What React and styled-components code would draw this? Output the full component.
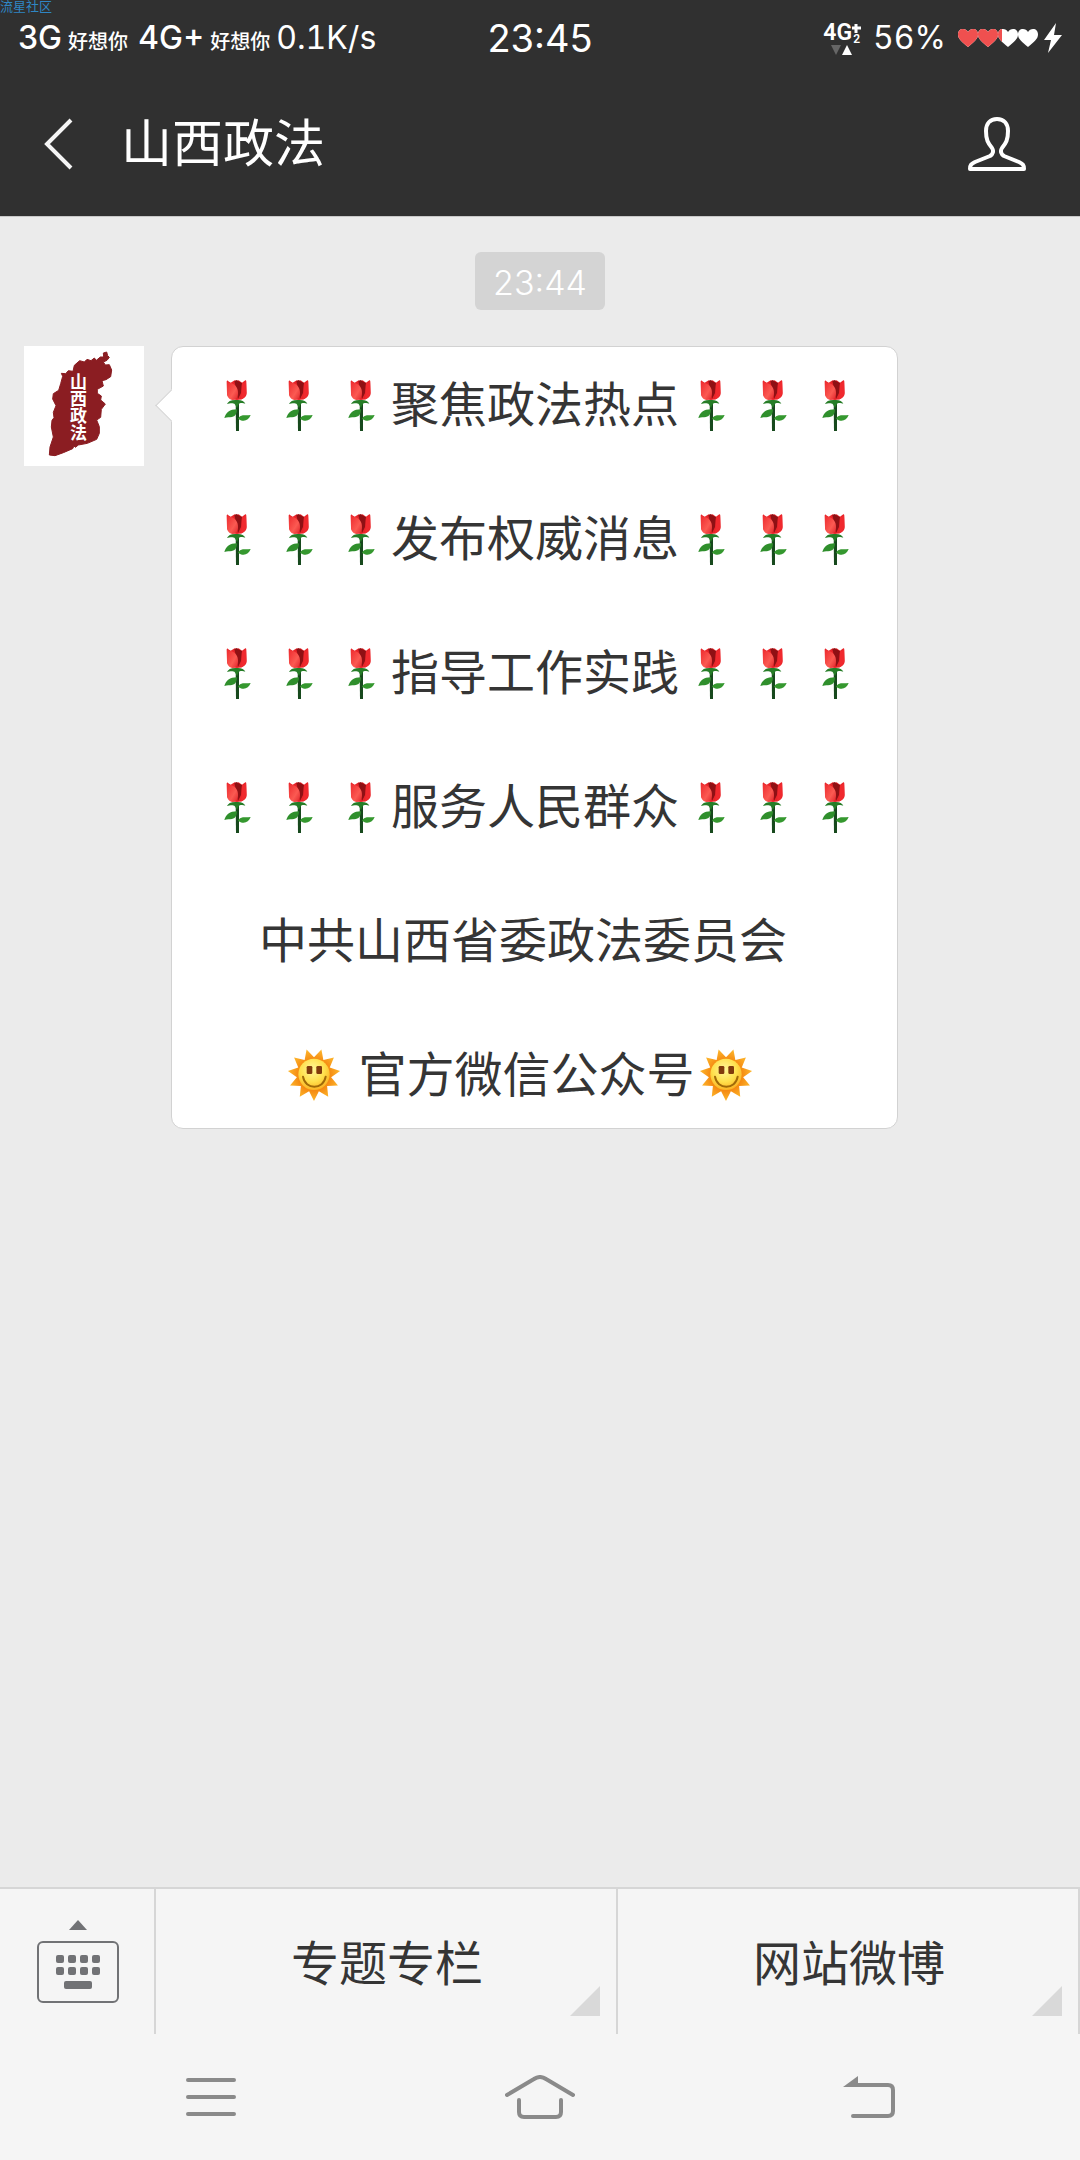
import React from "react";
import styled, { createGlobalStyle } from "styled-components";

const GlobalStyle = createGlobalStyle`
    * {
        box-sizing: border-box;
    }
    body {
        margin: 0;
        background-color: #ebebeb;
        font-family: Inter, "Noto Sans CJK SC", sans-serif;
    }
    button {
        margin: 0;
        padding: 0;
        border: 0;
        background: none;
        color: inherit;
        font: inherit;
        cursor: pointer;
    }
    svg {
        display: block;
    }
`;

const Page = styled.div`
    display: flex;
    flex-direction: column;
    min-height: 100vh;
`;

const TopArea = styled.header`
    position: relative;
    background-color: #303030;
    border-bottom: 1px solid #c8c8c8;
    color: #fff;
`;

const Watermark = styled.span`
    position: absolute;
    top: 0;
    left: 0;
    font-size: 13px;
    line-height: 13px;
    color: #2f86c4;
`;

const StatusBar = styled.div`
    display: grid;
    grid-template-columns: 1fr auto 1fr;
    align-items: center;
    height: 72px;
    padding: 4px 18px 0;
    line-height: 40px;
    white-space: nowrap;
`;

const StatusGroup = styled.div`
    display: flex;
    align-items: ${props => props.$end ? "center" : "baseline"};
    justify-content: ${props => props.$end ? "flex-end" : "flex-start"};
    padding-top: ${props => props.$end ? 0 : 4}px;
`;

const Network = styled.span`
    margin-right: 6px;
    font-size: 32px;
    font-weight: 500;
`;

const Carrier = styled.span`
    margin-right: ${props => props.$last ? 6 : 10}px;
    font-size: 20px;
    font-weight: 500;
`;

const StatusText = styled.span`
    font-size: 32px;
    font-variant-numeric: tabular-nums;
`;

const Clock = styled.time`
    font-size: 38px;
`;

const Signal = styled.span`
    display: flex;
    flex-direction: column;
    align-items: center;
    margin-right: 12px;
`;

const SignalLabel = styled.span`
    display: flex;
    font-family: Roboto, sans-serif;
    font-size: 23px;
    font-weight: 600;
    line-height: 22px;
`;

const SignalMarks = styled.span`
    display: flex;
    flex-direction: column;
    align-items: center;
    padding-top: 2px;
    font-size: 12px;
    line-height: 12px;
`;

const Battery = styled.span`
    display: flex;
    align-items: center;
    gap: 6px;
    margin-left: 12px;
`;

const TitleBar = styled.div`
    display: flex;
    align-items: center;
    height: 144px;
    padding: 0 54px 0 44px;
`;

const Title = styled.h1`
    flex: 1;
    margin: 0 0 0 47px;
    font-size: 51px;
    font-weight: 400;
    line-height: 72px;
`;

const Chat = styled.main`
    flex: 1;
    padding: 35px 24px;
    background-color: #ebebeb;
`;

const TimeStamp = styled.time`
    display: block;
    width: fit-content;
    margin: 0 auto 36px;
    padding: 4px 18px 0;
    border-radius: 6px;
    background-color: #d4d4d4;
    color: #fff;
    font-size: 34px;
    font-weight: 300;
    line-height: 54px;
`;

const Message = styled.div`
    display: flex;
    align-items: flex-start;
    gap: 27px;
`;

const Avatar = styled.div`
    position: relative;
    flex: none;
    width: 120px;
    height: 120px;
    background-color: #fff;
`;

const AvatarName = styled.span`
    position: absolute;
    top: 27px;
    left: 44px;
    color: #fff;
    font-family: "Noto Sans CJK SC", sans-serif;
    font-size: 17px;
    font-weight: 700;
    line-height: 20px;
    writing-mode: vertical-rl;
`;

const Bubble = styled.div`
    position: relative;
    display: flex;
    flex-direction: column;
    gap: 67px;
    padding: 24px 32px 20px 33px;
    border: 1px solid #d2d2d2;
    border-radius: 12px;
    background-color: #fff;
    color: #353535;
    font-size: 48px;
    line-height: 67px;
    &::before {
        content: "";
        position: absolute;
        top: 47px;
        left: -12px;
        width: 22px;
        height: 22px;
        border: solid #d2d2d2;
        border-width: 0 0 1px 1px;
        background-color: #fff;
        transform: rotate(45deg);
    }
`;

const Line = styled.p`
    display: flex;
    margin: 0;
    padding-left: ${props => props.$indent || 0}px;
    white-space: pre;
`;

const MenuBar = styled.nav`
    display: flex;
    height: 147px;
    border-top: 2px solid #d6d6d6;
    background-color: #f5f5f5;
    color: #353535;
`;

const KeyboardButton = styled.button`
    display: flex;
    justify-content: center;
    flex: none;
    width: 156px;
    padding: 31px 0 0 2px;
    border-right: 2px solid #d6d6d6;
`;

const MenuButton = styled.button`
    position: relative;
    flex: 1;
    padding: 0 0 4px 2px;
    border-right: 2px solid #d6d6d6;
    font-size: 48px;
    &::after {
        content: "";
        position: absolute;
        right: 16px;
        bottom: 18px;
        width: 30px;
        height: 30px;
        background-color: #d9d9d9;
        clip-path: polygon(100% 0, 100% 100%, 0 100%);
    }
`;

const SystemNav = styled.nav`
    display: flex;
    height: 126px;
    padding: 0 46px;
    background-color: #f5f5f5;
`;

const NavButton = styled.button`
    display: flex;
    align-items: center;
    justify-content: center;
    flex: 1;
`;

const lines = [
    { text: "聚焦政法热点", roses: true },
    { text: "发布权威消息", roses: true },
    { text: "指导工作实践", roses: true },
    { text: "服务人民群众", roses: true },
    { text: "中共山西省委政法委员会", indent: 54 },
    { text: " 官方微信公众号", indent: 78, suns: true },
];

const menus = ["专题专栏", "网站微博"];

const sunRays = Array.from({ length: 22 }, (_, i) => {
    const angle = Math.PI / 2 + (i * Math.PI) / 11;
    const radius = i % 2 ? 52 : 79;
    return `${132 + radius * Math.cos(angle)},${132 + radius * Math.sin(angle)}`;
}).join(" ");

function Gradients() {
    return (
        <svg width="0" height="0" style={{ position: "absolute" }} aria-hidden="true">
            <defs>
                <linearGradient id="petal" x1="0" y1="0" x2="1" y2="1">
                    <stop offset="0" stopColor="#ee2b2f" />
                    <stop offset="0.6" stopColor="#fb5a52" />
                    <stop offset="1" stopColor="#e0242a" />
                </linearGradient>
                <radialGradient id="rays">
                    <stop offset="0.6" stopColor="#f58a12" />
                    <stop offset="1" stopColor="#fdb62c" />
                </radialGradient>
                <radialGradient id="face" cx="0.45" cy="0.35" r="0.65">
                    <stop offset="0" stopColor="#fff79a" />
                    <stop offset="0.6" stopColor="#ffe04c" />
                    <stop offset="1" stopColor="#fbb324" />
                </radialGradient>
            </defs>
        </svg>
    );
}

function Rose() {
    return (
        <svg width="62" height="67" viewBox="-45 33 186 201" role="img" aria-label="玫瑰">
            <path d="M47 122h10v91h-9z" fill="#17491d" />
            <path d="M13 174c5-16 16-26 38-26-1 15-5 21-15 23-8 1-14 0-23 3z" fill="#2f8f2c" />
            <path d="M54 176c8-14 18-9 38-11-5 12-14 19-25 17-5-1-8-3-13-6z" fill="#35982f" />
            <path d="M20 66c0-5 3-6 5-2l7 4 12-7 6 2 6-2 10 7 7-5c4-4 6-2 6 3l1 34c0 12-12 20-29 20s-30-8-30-20z" fill="#e82429" />
            <path d="M43 64l7-4 8 5 8 4-3 30-9 18-4-25z" fill="#8f1014" />
            <path d="M21 65c3 0 4 3 9 3 14 3 25 14 24 32 0 13-7 19-16 20-10-1-17-9-17-20z" fill="url(#petal)" />
            <path d="M66 70c5 0 8-3 12-6l1 35c-1 10-8 17-17 20 5-17 2-30 4-49z" fill="#f0292e" />
            <path d="M21 132c3-8 13-13 29-12 14-1 23 4 26 11-8-3-12-2-17-1-4 4-6 9-8 15-2-5-4-10-8-14-8-1-13-2-22 1z" fill="#267d27" />
        </svg>
    );
}

function Sun() {
    return (
        <svg width="62" height="67" viewBox="39 31 186 201" role="img" aria-label="太阳">
            <polygon points={sunRays} fill="url(#rays)" />
            <circle cx="132" cy="131" r="47" fill="url(#face)" />
            <rect x="110" y="106" width="17" height="24" rx="4" fill="#813b0c" />
            <rect x="139" y="106" width="17" height="24" rx="4" fill="#813b0c" />
            <path d="M99 138c6 40 62 40 68 0" fill="none" stroke="#a06a08" strokeWidth="6" strokeLinecap="round" />
        </svg>
    );
}

function Roses() {
    return (
        <>
            <Rose />
            <Rose />
            <Rose />
        </>
    );
}

function ProvinceLogo() {
    return (
        <svg width="120" height="120" viewBox="72 48 360 360" aria-hidden="true">
            <path
                d="M320 66l3 11 5 5-7 9-11 5 6 9 12-1 7 16-3 20-14 9-12 3 4 16-18 10v12l12 8-2 12 14 12-12 16-2 24-12 8 8 20v20l-8 18-28 12-27 5-9 7-4-4-4 8-28 12-25 9-17-2 2-24 10-30-6-30 2-20 6-8-2-16 8-20-10-20 2-16 16-10 6-20 6-22-4-9 13 1 8-9 14 2 4-18 16-14 14 4 8-8 12 4 10-8 6 7 12-10h10l-1-12z"
                fill="#8b1d22"
                stroke="#8b1d22"
                strokeWidth="3"
                strokeLinejoin="round"
            />
        </svg>
    );
}

function BatteryIcon() {
    const heart = "M10 18C4 13 0 10 0 5.500C0 2 2 0 5 0c2 0 4 1 5 3 1-2 3-3 5-3 3 0 5 2 5 5.500 0 4.500-4 7.500-10 12.500z";
    return (
        <>
            <svg width="80" height="18" viewBox="0 0 80 18" aria-hidden="true">
                <defs>
                    <clipPath id="charge"><rect width="44" height="18" /></clipPath>
                </defs>
                {[0, 20, 40, 60].map((x) => <path key={x} d={heart} transform={`translate(${x} 0)`} fill="#fff" />)}
                <g clipPath="url(#charge)">
                    {[0, 20, 40].map((x) => <path key={x} d={heart} transform={`translate(${x} 0)`} fill="#f0504f" />)}
                </g>
            </svg>
            <svg width="18" height="30" viewBox="0 0 18 30" aria-hidden="true">
                <path d="M12 0L0 17h7L4 30 18 12h-8z" fill="#fff" />
            </svg>
        </>
    );
}

function App() {
    return (
        <Page>
            <GlobalStyle />
            <Gradients />
            <TopArea>
                <Watermark>流星社区</Watermark>
                <StatusBar>
                    <StatusGroup>
                        <Network>3G</Network>
                        <Carrier>好想你</Carrier>
                        <Network>4G+</Network>
                        <Carrier $last>好想你</Carrier>
                        <StatusText>0.1K/s</StatusText>
                    </StatusGroup>
                    <Clock>23:45</Clock>
                    <StatusGroup $end>
                        <Signal>
                            <SignalLabel>
                                4G
                                <SignalMarks>
                                    <svg width="9" height="9" viewBox="0 0 9 9" aria-hidden="true">
                                        <path d="M4 0v9M0 4h9" stroke="#fff" strokeWidth="3" />
                                    </svg>
                                    <span>2</span>
                                </SignalMarks>
                            </SignalLabel>
                            <svg width="22" height="10" viewBox="0 0 22 10" aria-hidden="true">
                                <path d="M0 0h10L5 10z" fill="#666" />
                                <path d="M11 10h10L16 0z" fill="#fff" />
                            </svg>
                        </Signal>
                        <StatusText>56%</StatusText>
                        <Battery><BatteryIcon /></Battery>
                    </StatusGroup>
                </StatusBar>
                <TitleBar>
                    <button type="button" aria-label="返回">
                        <svg width="30" height="52" viewBox="0 0 30 52" fill="none" stroke="#f5f5f5" strokeWidth="4">
                            <path d="M27 2L3 26l24 24" />
                        </svg>
                    </button>
                    <Title>山西政法</Title>
                    <button type="button" aria-label="公众号资料">
                        <svg width="58" height="54" viewBox="0 0 58 54" fill="none" stroke="#fff" strokeWidth="4" strokeLinejoin="round">
                            <path d="M29 2c-7 0-11 5-11 12 0 9 2 12 6 17 2 3 1 6-2 8L7 45c-4 2-5 3-5 7h54c0-4-1-5-5-7l-15-6c-3-2-4-5-2-8 4-5 6-8 6-17 0-7-4-12-11-12z" />
                        </svg>
                    </button>
                </TitleBar>
            </TopArea>
            <Chat>
                <TimeStamp>23:44</TimeStamp>
                <Message>
                    <Avatar>
                        <ProvinceLogo />
                        <AvatarName>山西政法</AvatarName>
                    </Avatar>
                    <Bubble>
                        {lines.map(({ text, indent, roses, suns }) => (
                            <Line key={text} $indent={indent}>
                                {roses ? <Roses /> : null}
                                {suns ? <Sun /> : null}
                                <span>{text}</span>
                                {roses ? <Roses /> : null}
                                {suns ? <Sun /> : null}
                            </Line>
                        ))}
                    </Bubble>
                </Message>
            </Chat>
            <MenuBar>
                <KeyboardButton type="button" aria-label="切换键盘">
                    <svg width="82" height="83" viewBox="0 0 82 83" fill="#717275">
                        <path d="M32 10h18L41 0z" />
                        <rect x="1" y="22" width="80" height="60" rx="5" fill="none" stroke="#717275" strokeWidth="2" />
                        {[19, 31, 43, 55].map((x) => (
                            <React.Fragment key={x}>
                                <rect x={x} y="35" width="8" height="8" rx="2" />
                                <rect x={x} y="47" width="8" height="8" rx="2" />
                            </React.Fragment>
                        ))}
                        <rect x="27" y="61" width="28" height="8" rx="2" />
                    </svg>
                </KeyboardButton>
                {menus.map((name) => <MenuButton type="button" key={name}>{name}</MenuButton>)}
            </MenuBar>
            <SystemNav>
                <NavButton type="button" aria-label="最近任务">
                    <svg width="50" height="38" viewBox="0 0 50 38" stroke="#8a8a8a" strokeWidth="4" strokeLinecap="round">
                        <path d="M2 2h46M2 19h46M2 36h46" />
                    </svg>
                </NavButton>
                <NavButton type="button" aria-label="主屏幕">
                    <svg width="70" height="44" viewBox="0 0 70 44" fill="none" stroke="#8a8a8a" strokeWidth="4" strokeLinecap="round">
                        <path d="M2 20L29 4q6-4 12 0l27 16M14 25v12q0 5 5 5h32q5 0 5-5V25" />
                    </svg>
                </NavButton>
                <NavButton type="button" aria-label="返回上一页">
                    <svg width="52" height="42" viewBox="0 0 52 42" fill="none" stroke="#8a8a8a" strokeWidth="4" strokeLinecap="round">
                        <path d="M10 9h35q5 0 5 5v21q0 5-5 5H10" />
                        <path d="M0 11L15 0v11z" fill="#8a8a8a" stroke="none" />
                    </svg>
                </NavButton>
            </SystemNav>
        </Page>
    );
}

export default App;
